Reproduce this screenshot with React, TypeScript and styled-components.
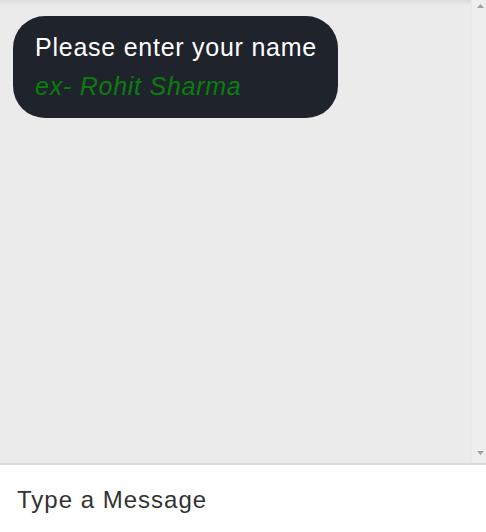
import styled, { createGlobalStyle } from "styled-components";

const GlobalStyle = createGlobalStyle`
  html, body {
    margin: 0;
    padding: 0;
    height: 100%;
    font-family: "Liberation Sans", Arial, sans-serif;
  }
  #root {
    height: 100%;
  }
`;

const Page = styled.div`
  display: flex;
  flex-direction: column;
  height: 100vh;
`;

const ChatPane = styled.div`
  flex: 1;
  display: flex;
  min-height: 0;
  background: #ebebeb;
  box-shadow: inset 0 5px 4px -3px rgba(0, 0, 0, 0.08);
`;

const Messages = styled.div`
  flex: 1;
  padding: 16px 13px;
  display: flex;
  flex-direction: column;
  align-items: flex-start;
`;

const ScrollTrack = styled.div`
  width: 15px;
  background: #eeeeee;
  border-left: 1px solid #e8e8e8;
  display: flex;
  flex-direction: column;
  justify-content: space-between;
  align-items: center;
  padding: 4px 0 8px 3px;
  box-sizing: border-box;
`;

const Bubble = styled.div`
  background: #1f232b;
  border-radius: 32px;
  padding: 13px 21px 13px 22px;
  display: flex;
  flex-direction: column;
  gap: 2px;
`;

const Line = styled.span<{ $hint?: boolean }>`
  font-size: 25px;
  line-height: 37px;
  letter-spacing: 0.75px;
  white-space: nowrap;
  color: ${(p) => (p.$hint ? "#0b7d10" : "#ffffff")};
  font-style: ${(p) => (p.$hint ? "italic" : "normal")};
`;

const InputBar = styled.div`
  height: 69px;
  flex-shrink: 0;
  border-top: 2px solid #d9d9d9;
  background: #ffffff;
  display: flex;
  align-items: center;
  padding: 2px 17px 0;
  box-sizing: border-box;
`;

const MessageInput = styled.input`
  flex: 1;
  border: none;
  outline: none;
  background: transparent;
  font-family: inherit;
  font-size: 24px;
  letter-spacing: 1px;
  color: #222;
  padding: 0;
  &::placeholder {
    color: #333;
  }
`;

function Arrow({ down }: { down?: boolean }) {
  return (
    <svg width="7" height="4" viewBox="0 0 7 4">
      <path
        d={down ? "M0 0 H7 L3.5 4 Z" : "M0 4 H7 L3.5 0 Z"}
        fill="#a0a0a0"
      />
    </svg>
  );
}

export default function App() {
  return (
    <Page>
      <GlobalStyle />
      <ChatPane>
        <Messages>
          <Bubble>
            <Line>Please enter your name</Line>
            <Line $hint>ex- Rohit Sharma</Line>
          </Bubble>
        </Messages>
        <ScrollTrack>
          <Arrow />
          <Arrow down />
        </ScrollTrack>
      </ChatPane>
      <InputBar>
        <MessageInput placeholder="Type a Message" />
      </InputBar>
    </Page>
  );
}
